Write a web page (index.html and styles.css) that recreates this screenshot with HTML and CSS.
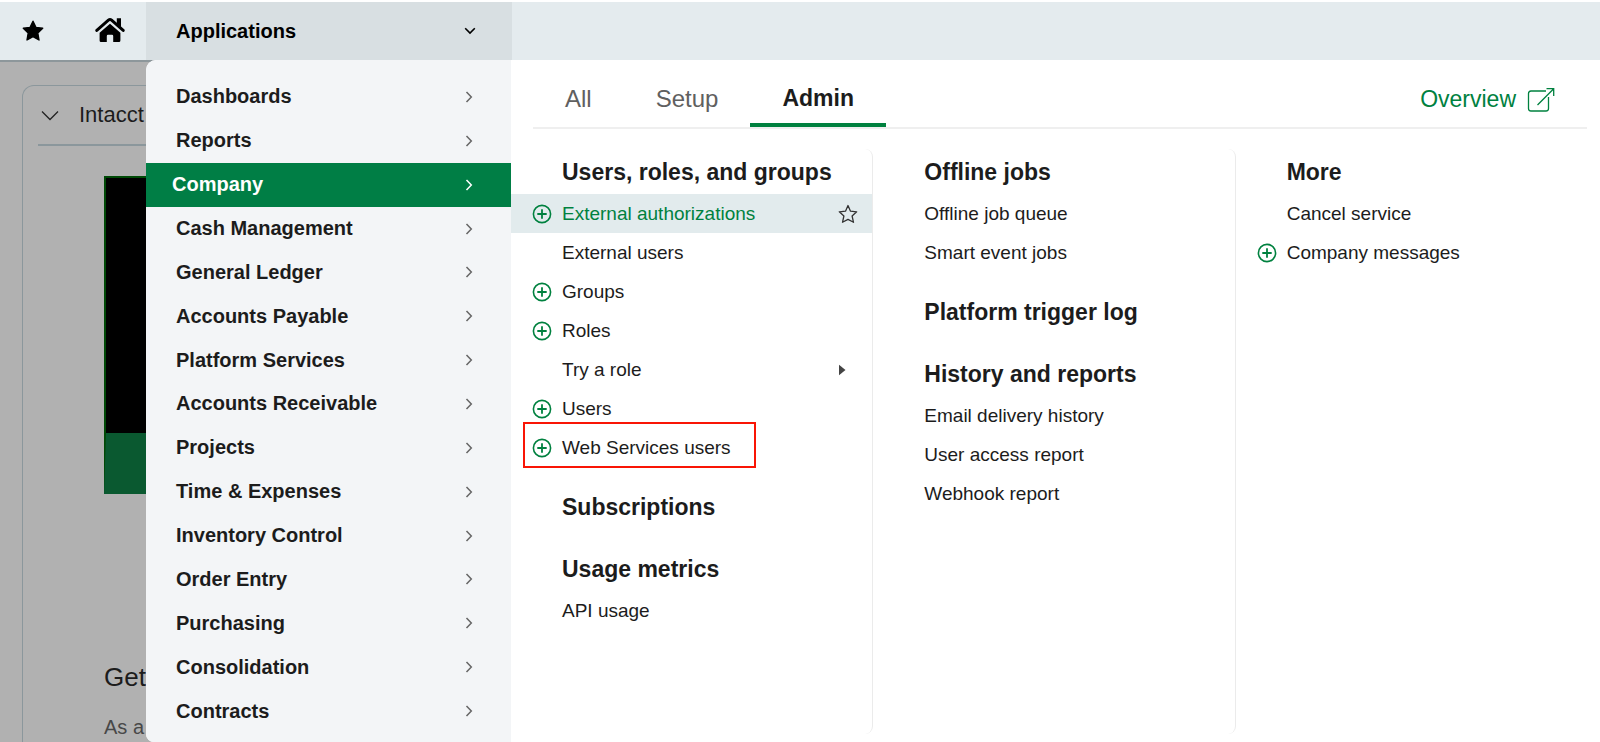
FILE: index.html
```html
<!DOCTYPE html>
<html lang="en">
<head>
<meta charset="utf-8">
<title>Applications</title>
<meta name="viewport" content="width=device-width, initial-scale=1">
<link rel="stylesheet" href="styles.css">
</head>
<body>
<svg class="defs" aria-hidden="true">
  <symbol id="chev" viewBox="0 0 8 12"><path d="M1.500 1 6.300 6 1.500 11" fill="none" stroke="currentColor" stroke-width="1.500"/></symbol>
  <symbol id="plus" viewBox="0 0 20 20"><circle cx="10" cy="10" r="8.600" fill="none" stroke="currentColor" stroke-width="1.600"/><path d="M10 5.300v9.400M5.300 10h9.400" stroke="currentColor" stroke-width="1.800"/></symbol>
</svg>
<div class="app">
  <header class="topbar">
    <button class="icon-btn star-btn" aria-label="Favorites">
      <svg width="22" height="22" viewBox="0 0 22 22"><path d="M11 1.200 13.900 7.400 20.700 8.300 15.800 13 17 20 11 16.700 5 20 6.200 13 1.300 8.300 8.100 7.400z" fill="#000" stroke="#000" stroke-width="1.400" stroke-linejoin="round"/></svg>
    </button>
    <button class="icon-btn home-btn" aria-label="Home">
      <svg width="30" height="26" viewBox="0 0 30 26"><path d="M1.800 13.400 13.400 3.200Q15 1.900 16.600 3.200L28.200 13.400" fill="none" stroke="#000" stroke-width="3" stroke-linecap="round"/><path d="M21.800 1.200h4.200v9l-4.200-3.500z" fill="#000"/><path d="M15 6.800 25.400 15.800V23.500Q25.400 25 24 25H18.200v-6q0-1.200-1.200-1.200h-4q-1.200 0-1.200 1.200V25H6Q4.600 25 4.600 23.500V15.800z" fill="#000"/></svg>
    </button>
    <button class="apps-btn" aria-expanded="true">Applications
      <svg width="12" height="8" viewBox="0 0 12 8"><path d="M1.200 1.200 6 6 10.800 1.200" fill="none" stroke="#000" stroke-width="1.600"/></svg>
    </button>
  </header>

  <main class="dashboard">
    <section class="card">
      <div class="card-head">
        <svg width="18" height="11" viewBox="0 0 18 11"><path d="M1 1.500 9 9.500 17 1.500" fill="none" stroke="#222" stroke-width="1.300"/></svg>
        <span>Intacct</span>
      </div>
      <div class="card-body">
        <div class="banner"></div>
        <h2>Get</h2>
        <p>As a</p>
      </div>
    </section>
  </main>

  <div class="mega">
    <nav class="modules" aria-label="Applications">
      <a href="#">Dashboards<svg><use href="#chev"/></svg></a>
      <a href="#">Reports<svg><use href="#chev"/></svg></a>
      <a href="#" class="current">Company<svg><use href="#chev"/></svg></a>
      <a href="#">Cash Management<svg><use href="#chev"/></svg></a>
      <a href="#">General Ledger<svg><use href="#chev"/></svg></a>
      <a href="#">Accounts Payable<svg><use href="#chev"/></svg></a>
      <a href="#">Platform Services<svg><use href="#chev"/></svg></a>
      <a href="#">Accounts Receivable<svg><use href="#chev"/></svg></a>
      <a href="#">Projects<svg><use href="#chev"/></svg></a>
      <a href="#">Time &amp; Expenses<svg><use href="#chev"/></svg></a>
      <a href="#">Inventory Control<svg><use href="#chev"/></svg></a>
      <a href="#">Order Entry<svg><use href="#chev"/></svg></a>
      <a href="#">Purchasing<svg><use href="#chev"/></svg></a>
      <a href="#">Consolidation<svg><use href="#chev"/></svg></a>
      <a href="#">Contracts<svg><use href="#chev"/></svg></a>
    </nav>

    <div class="panel">
      <div class="tabs">
        <button class="tab">All</button>
        <button class="tab">Setup</button>
        <button class="tab active">Admin</button>
        <a href="#" class="overview">Overview
          <svg width="28" height="26" viewBox="0 0 28 26"><path d="M19 4H4Q1.500 4 1.500 6.500V21.500Q1.500 24 4 24H19Q21.500 24 21.500 21.500V10" fill="none" stroke="currentColor" stroke-width="1.300"/><path d="M10.500 18 26.200 2.200M19.500 1.700h7.200V9" fill="none" stroke="currentColor" stroke-width="1.300"/></svg>
        </a>
      </div>

      <div class="columns">
        <div class="column">
          <section>
            <h3>Users, roles, and groups</h3>
            <ul>
              <li class="hover"><button class="add" aria-label="Add external authorization"><svg><use href="#plus"/></svg></button><a href="#">External authorizations</a>
                <button class="fav" aria-label="Add to favorites"><svg width="20" height="20" viewBox="0 0 20 20"><path d="M10 1.500 12.500 7.200 18.700 7.800 14.100 12 15.500 18.300 10 15.400 4.500 18.300 5.900 12 1.300 7.800 7.500 7.200z" fill="none" stroke="#333" stroke-width="1.300" stroke-linejoin="round"/></svg></button></li>
              <li><a href="#">External users</a></li>
              <li><button class="add" aria-label="Add group"><svg><use href="#plus"/></svg></button><a href="#">Groups</a></li>
              <li><button class="add" aria-label="Add role"><svg><use href="#plus"/></svg></button><a href="#">Roles</a></li>
              <li><a href="#">Try a role</a><svg class="caret" viewBox="0 0 7 12"><path d="M0 .800 6.500 6 0 11.200z" fill="#444"/></svg></li>
              <li><button class="add" aria-label="Add user"><svg><use href="#plus"/></svg></button><a href="#">Users</a></li>
              <li class="marked"><button class="add" aria-label="Add Web Services user"><svg><use href="#plus"/></svg></button><a href="#">Web Services users</a></li>
            </ul>
          </section>
          <section><h3>Subscriptions</h3></section>
          <section>
            <h3>Usage metrics</h3>
            <ul><li><a href="#">API usage</a></li></ul>
          </section>
        </div>
        <div class="column">
          <section>
            <h3>Offline jobs</h3>
            <ul>
              <li><a href="#">Offline job queue</a></li>
              <li><a href="#">Smart event jobs</a></li>
            </ul>
          </section>
          <section><h3>Platform trigger log</h3></section>
          <section>
            <h3>History and reports</h3>
            <ul>
              <li><a href="#">Email delivery history</a></li>
              <li><a href="#">User access report</a></li>
              <li><a href="#">Webhook report</a></li>
            </ul>
          </section>
        </div>
        <div class="column">
          <section>
            <h3>More</h3>
            <ul>
              <li><a href="#">Cancel service</a></li>
              <li><button class="add" aria-label="Add company message"><svg><use href="#plus"/></svg></button><a href="#">Company messages</a></li>
            </ul>
          </section>
        </div>
      </div>
    </div>
  </div>
</div>
</body>
</html>
```

FILE: styles.css
```css
*,
*::after {
  box-sizing: border-box;
}

body {
  margin: 0;
  background: #b1b1b1;
  color: #1c1c1c;
  font-family: "Liberation Sans", Arial, sans-serif;
}

button {
  padding: 0;
  border: 0;
  background: none;
  color: inherit;
  font: inherit;
}

a {
  color: inherit;
  text-decoration: none;
}

h2, h3, p, ul {
  margin: 0;
  padding: 0;
}

ul {
  list-style: none;
}

svg {
  display: block;
  flex: none;
}

.defs {
  position: absolute;
  width: 0;
  height: 0;
}

.app {
  position: relative;
  display: flex;
  flex-direction: column;
  min-height: 100vh;
  overflow: hidden;
}

/* Top bar */
.topbar {
  display: flex;
  height: 62px;
  border-top: 2px solid #fff;
  border-bottom: 2px solid #8d979b;
  background: #e4ebee;
}

.icon-btn {
  display: flex;
  align-items: center;
}

.star-btn {
  width: 73px;
  padding-left: 22px;
}

.home-btn {
  width: 73px;
  padding: 0 0 3px 22px;
}

.apps-btn {
  display: flex;
  align-items: center;
  justify-content: space-between;
  width: 366px;
  padding: 0 36px 0 30px;
  background: #d8dfe2;
  color: #000;
  font-size: 20px;
  font-weight: bold;
}

/* Dimmed dashboard */
.dashboard {
  display: flex;
  flex: 1;
  padding: 23px 22px 0;
}

.card {
  flex: 1;
  padding: 0 15px;
  border: 1px solid #8b979c;
  border-bottom: 0;
  border-radius: 12px 12px 0 0;
}

.card-head {
  display: flex;
  align-items: center;
  gap: 20px;
  height: 60px;
  padding-left: 3px;
  border-bottom: 2px solid #8b979c;
  font-size: 22px;
}

.card-body {
  padding: 30px 66px 0;
}

.banner {
  height: 318px;
  border: 2px solid #004a06;
  border-bottom: 61px solid #0a5930;
  background: #000;
}

.card-body h2 {
  margin-top: 167px;
  font-size: 26px;
  font-weight: normal;
  line-height: 32px;
}

.card-body p {
  margin-top: 22px;
  color: #484848;
  font-size: 20px;
  line-height: 24px;
}

/* Mega menu */
.mega {
  position: absolute;
  inset: 60px 0 0 146px;
  display: flex;
  overflow: hidden;
  border-radius: 10px 0 0 8px;
  background: #fff;
}

.modules {
  display: grid;
  grid-auto-rows: minmax(40px, 1fr);
  width: 365px;
  padding: 15px 0 9px;
  background: #f3f5f7;
  font-size: 20px;
  font-weight: bold;
}

.modules a {
  display: flex;
  align-items: center;
  justify-content: space-between;
  padding: 0 38px 0 30px;
}

.modules svg {
  width: 8px;
  height: 12px;
  color: #666;
}

.modules .current {
  padding-left: 26px;
  background: #007e45;
  color: #fff;
}

.modules .current svg {
  color: #fff;
}

.panel {
  display: flex;
  flex: 1;
  flex-direction: column;
  padding-bottom: 8px;
}

.tabs {
  display: flex;
  height: 69px;
  margin: 0 13px 0 22px;
  border-bottom: 2px solid #efefef;
}

.tab {
  padding: 18px 32px 4px;
  border-bottom: 4px solid transparent;
  color: #606060;
  font-size: 24px;
}

.tab.active {
  border-color: #00813f;
  color: #1c1c1c;
  font-size: 23px;
  font-weight: bold;
}

.overview {
  display: flex;
  align-items: center;
  gap: 11px;
  margin-left: auto;
  padding: 12px 32px 0 0;
  color: #00813f;
  font-size: 23px;
}

.columns {
  display: grid;
  flex: 1;
  grid-template-columns: repeat(3, 1fr);
  margin-top: 20px;
  padding-right: 2px;
}

.column {
  display: flex;
  flex-direction: column;
  gap: 17px;
  border-right: 1px solid #ebebeb;
  border-radius: 8px;
}

.column:last-child {
  border-right: 0;
}

.column h3 {
  padding: 2px 0 0 51px;
  font-size: 23px;
  line-height: 43px;
}

.column li {
  position: relative;
  display: grid;
  grid-template-columns: 20px 1fr auto;
  align-items: center;
  column-gap: 10px;
  height: 39px;
  padding: 0 14px 0 21px;
  font-size: 19px;
}

.column li a {
  grid-column: 2;
}

.add {
  color: #00813f;
}

.add svg {
  width: 20px;
  height: 20px;
}

.column .hover {
  background: #e2ebed;
  color: #00813f;
}

.caret {
  width: 7px;
  height: 12px;
  margin-right: 12px;
}

.marked::after {
  content: "";
  position: absolute;
  inset: -6px auto -1px 12px;
  width: 233px;
  border: 2px solid #f91505;
}
```
